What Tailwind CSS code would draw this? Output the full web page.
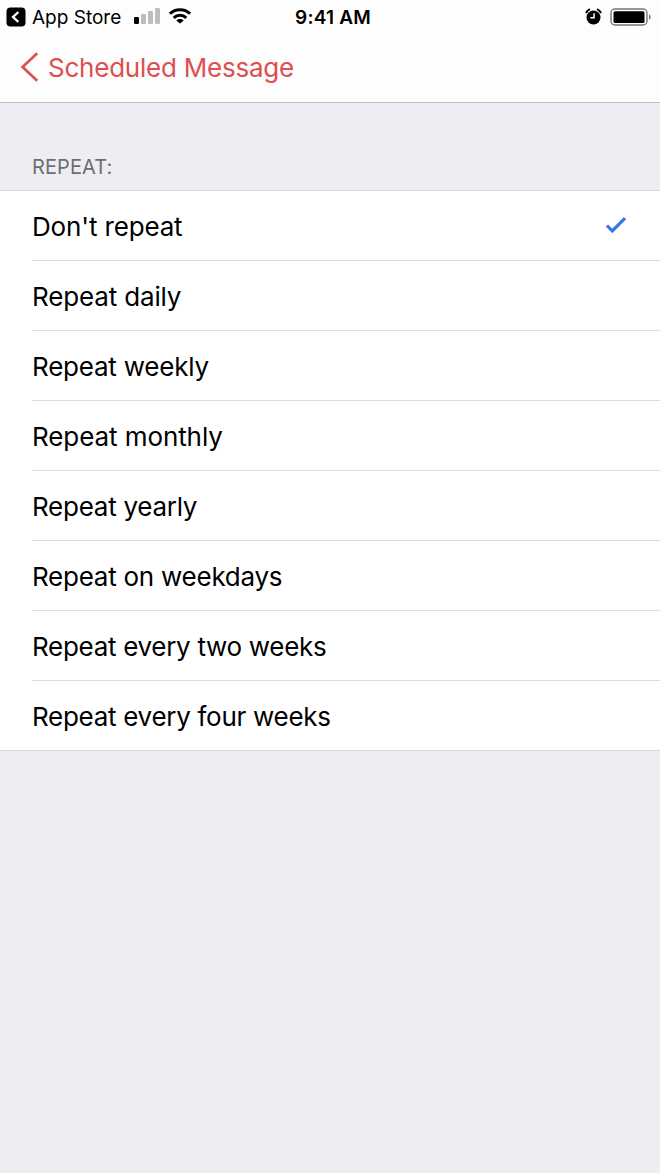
<!DOCTYPE html>
<html lang="en">
<head>
<meta charset="utf-8">
<title>Repeat</title>
<script src="https://cdn.jsdelivr.net/npm/@tailwindcss/browser@4"></script>
</head>
<body class="w-[660px] h-[1173px] overflow-hidden bg-[#eeedf3] font-['Inter',sans-serif] text-black">
<header class="h-[103px] bg-[#fdfdfd] border-b border-[#bfbfc4]">
  <div class="h-[34px] grid grid-cols-3 items-center">
    <div class="flex items-center pl-[6px]">
      <svg class="w-5 h-5 mb-[2px]" viewBox="0 0 20 20"><rect x="0.5" y="0.5" width="19" height="19" rx="4" fill="#000"/><path d="M12.3 5.2 7 10l5.3 4.8" fill="none" stroke="#fff" stroke-width="2.3"/></svg>
      <span class="ml-[6px] w-[90px] text-[19px] leading-[34px] whitespace-nowrap pt-px">App Store</span>
      <svg class="ml-[12px] w-[26px] h-[18px] mb-px" viewBox="0 0 26 18"><rect x="0" y="9" width="5" height="7" rx="1.2" fill="#000"/><g fill="#bdbdbd"><rect x="7" y="6" width="5" height="10" rx="1.2"/><rect x="14" y="3" width="5" height="13" rx="1.2"/><rect x="21" y="0" width="5" height="16" rx="1.2"/></g></svg>
      <svg class="ml-[9px] w-[22px] h-[17px] mb-[2px]" viewBox="0 0 22 17"><g fill="none" stroke="#000" stroke-width="3"><path d="M1 5.700C6.500.500 15.500.500 21 5.700"/><path d="M4.700 9.800C8.300 6.300 13.700 6.300 17.300 9.800"/></g><path d="M7.300 12.400C9.400 10.500 12.600 10.500 14.700 12.400L11 15.600Z" fill="#000"/></svg>
    </div>
    <div class="text-center text-[19px] leading-[34px] font-semibold tracking-[0.2px] pl-[6px] pt-px">9:41 AM</div>
    <div class="flex items-center justify-end pr-[8px] pb-[2px]">
      <svg class="w-[17px] h-[18px]" viewBox="0 0 17 18"><circle cx="8.500" cy="9.500" r="7" fill="#000"/><path d="M1 5A8 8 0 0 1 5 1.200M16 5a8 8 0 0 0-4-3.800" fill="none" stroke="#000" stroke-width="2"/><path d="M9 5.200v4.600H5.300" fill="none" stroke="#fff" stroke-width="1.500"/></svg>
      <svg class="ml-[8px] w-[42px] h-[18px]" viewBox="0 0 42 18"><rect x="1" y="1" width="36" height="16" rx="4" fill="none" stroke="#777" stroke-width="1.400"/><rect x="3.500" y="3.300" width="31" height="11.600" rx="1.500" fill="#000"/><path d="M39 6.500c2.200.6 2.200 4.600 0 5.200Z" fill="#777"/></svg>
    </div>
  </div>
  <div class="h-[66px] flex items-center pl-[20px] text-[#dd4f50]">
    <svg class="w-[19px] h-[30px]" viewBox="0 0 19 30"><path d="M17.200 1.200 2.600 15l14.600 13.800" fill="none" stroke="currentColor" stroke-width="2.700"/></svg>
    <span class="ml-[9px] pt-px text-[26px] leading-[66px] tracking-[-0.23px] whitespace-nowrap">Scheduled Message</span>
  </div>
</header>
<main>
  <h2 class="h-[88px] pt-[52px] pl-[32px] border-b border-[#dadade] text-[20px] leading-[24px] text-[#6d6d72] tracking-[0.1px]">REPEAT:</h2>
  <ul class="bg-white border-b border-[#d9d9dc] pl-[32px] text-[26px] leading-[71px] whitespace-nowrap">
    <li class="h-[70px] border-b border-[#dedee0] flex items-center justify-between pr-[33px] tracking-[-0.15px]"><span class="pt-px">Don't repeat</span>
      <svg class="w-[22px] h-[18px] mb-px" viewBox="0 0 22 18"><path d="M2 9.500 7.300 15 20 2.200" fill="none" stroke="#3478e5" stroke-width="3.200"/></svg></li>
    <li class="h-[70px] border-b border-[#dedee0] tracking-[-0.15px]">Repeat daily</li>
    <li class="h-[70px] border-b border-[#dedee0] tracking-[-0.22px]">Repeat weekly</li>
    <li class="h-[70px] border-b border-[#dedee0] tracking-[-0.08px]">Repeat monthly</li>
    <li class="h-[70px] border-b border-[#dedee0] tracking-[-0.26px]">Repeat yearly</li>
    <li class="h-[70px] border-b border-[#dedee0] tracking-[-0.25px]">Repeat on weekdays</li>
    <li class="h-[70px] border-b border-[#dedee0] tracking-[-0.3px]">Repeat every two weeks</li>
    <li class="h-[69px] tracking-[-0.29px]">Repeat every four weeks</li>
  </ul>
</main>
</body>
</html>
